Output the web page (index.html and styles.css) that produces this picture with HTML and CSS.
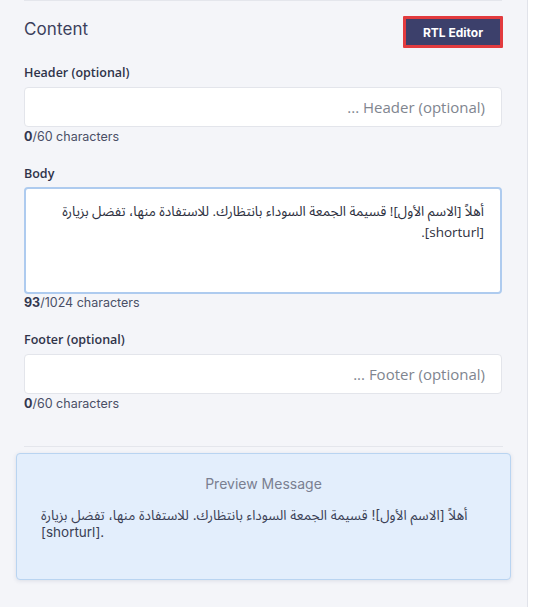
FILE: index.html
```html
<!DOCTYPE html>
<html lang="en">
<head>
<meta charset="utf-8">
<title>Content</title>
<link rel="stylesheet" href="styles.css">
</head>
<body>
<div class="layout">
  <section class="panel">
    <div class="divider divider-top"></div>
    <div class="panel-head">
      <h2 class="title">Content</h2>
      <button class="rtl-btn" type="button">RTL Editor</button>
    </div>

    <div class="field">
      <label class="label" for="hdr">Header (optional)</label>
      <input class="input" id="hdr" dir="rtl" type="text" placeholder="Header (optional) ...">
      <div class="counter"><b>0</b>/60 characters</div>
    </div>

    <div class="field">
      <label class="label" for="body">Body</label>
      <textarea class="input textarea" id="body" dir="rtl">أهلاً [الاسم الأول]! قسيمة الجمعة السوداء بانتظارك. للاستفادة منها، تفضل بزيارة [shorturl].</textarea>
      <div class="counter counter-tight"><b>93</b>/1024 characters</div>
    </div>

    <div class="field">
      <label class="label" for="ftr">Footer (optional)</label>
      <input class="input" id="ftr" dir="rtl" type="text" placeholder="Footer (optional) ...">
      <div class="counter"><b>0</b>/60 characters</div>
    </div>

    <div class="divider divider-bottom"></div>

    <div class="preview">
      <div class="preview-title">Preview Message</div>
      <p class="preview-text">أهلاً [الاسم الأول]! قسيمة الجمعة السوداء بانتظارك. للاستفادة منها، تفضل بزيارة [shorturl].</p>
    </div>
  </section>
  <aside class="side"></aside>
</div>
</body>
</html>
```

FILE: styles.css
```css
* { box-sizing: border-box; }

html, body {
  margin: 0;
  padding: 0;
  height: 100%;
  background: #ffffff;
}

body {
  font-family: "Inter", "DejaVu Sans", sans-serif;
  color: #33374f;
}

.layout {
  display: flex;
  min-height: 100%;
}

.panel {
  width: 528px;
  flex: none;
  background: #f4f5f9;
  border-right: 1px solid #e1e3ea;
  padding: 0 25px 0 24px;
  min-height: 607px;
}

.side {
  flex: 1;
  background: #ffffff;
}

.divider {
  height: 1px;
  background: #e4e6ec;
}

.panel-head {
  display: flex;
  align-items: center;
  justify-content: space-between;
  margin-top: 15px;
  height: 32px;
}

.title {
  margin: 0 0 6px 0;
  font-size: 17px;
  line-height: 22px;
  font-weight: 400;
  color: #3b3f5c;
  letter-spacing: 0.1px;
}

.rtl-btn {
  height: 32px;
  width: 100px;
  margin-right: -1px;
  background: #3c406b;
  border: 3px solid #e23b3f;
  border-radius: 1px;
  color: #ffffff;
  font-family: "Inter", sans-serif;
  font-weight: 700;
  font-size: 12px;
  padding: 0;
}

.field {
  display: flex;
  flex-direction: column;
  margin-top: 16px;
}

.field + .field {
  margin-top: 20px;
}

.label {
  font-family: "Open Sans", sans-serif;
  font-weight: 600;
  font-size: 12.5px;
  line-height: 18px;
  color: #2f3349;
  margin-bottom: 5px;
}

.input {
  height: 40px;
  background: #ffffff;
  border: 1px solid #e3e5eb;
  border-radius: 4px;
  padding: 0 16px;
  font-family: "Open Sans", "DejaVu Sans", sans-serif;
  font-size: 15px;
  color: #3a3f55;
  outline: none;
}

.input::placeholder {
  color: #80858f;
}

.textarea {
  height: 107px;
  border: 2px solid #aecbef;
  padding: 12px 16px;
  line-height: 21px;
  font-size: 13.5px;
  resize: none;
  margin-top: -1px;
  font-family: "Open Sans", "Noto Sans Arabic", "Noto Naskh Arabic", "DejaVu Sans", sans-serif;
  color: #2d3040;
}

.counter {
  margin-top: 2px;
  font-size: 12.5px;
  line-height: 16px;
  color: #4a4f66;
}

.counter-tight {
  margin-top: 1px;
}

.counter b {
  font-weight: 700;
  color: #33374f;
}

.divider-bottom {
  margin-top: 34px;
  margin-right: -1px;
}

.preview {
  margin: 6px -9px 0 -8px;
  background: #e3eefc;
  border: 1px solid #b9d4f1;
  border-radius: 4px;
  box-shadow: 0 1px 4px rgba(40, 60, 100, 0.12);
  padding: 20px 24px 38px 24px;
  height: 127px;
}

.preview-title {
  text-align: center;
  font-size: 14px;
  line-height: 20px;
  color: #7a7f91;
}

.preview-text {
  margin: 13px 0 0 0;
  font-family: "Inter", "Noto Sans Arabic", "Noto Naskh Arabic", "DejaVu Sans", sans-serif;
  font-size: 13.5px;
  line-height: 17px;
  color: #3a3f55;
}
```
